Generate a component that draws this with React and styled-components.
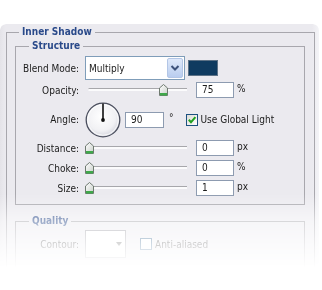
import styled, { createGlobalStyle } from 'styled-components';

const GlobalStyle = createGlobalStyle`
  html, body {
    margin: 0;
    background: #fff;
  }
  body {
    font-family: "DejaVu Sans Condensed", "DejaVu Sans", sans-serif;
    font-size: 10px;
    color: #1c1c1c;
  }
`;

const Page = styled.div`
  width: 322px;
  height: 290px;
  padding-top: 24px;
  box-sizing: border-box;
  overflow: hidden;
`;

const fade = `linear-gradient(to bottom, #000 170px, rgba(0, 0, 0, 0.45) 197px, rgba(0, 0, 0, 0.2) 221px, transparent 244px)`;

const Panel = styled.div`
  width: 319px;
  height: 266px;
  box-sizing: border-box;
  padding: 1px 4px 0 6px;
  border-radius: 6px 6px 0 0;
  background: linear-gradient(to right, #e4e3e8, #ebeaef 5px, #ebeaef 312px, #f4f4f7);
  overflow: hidden;
  mask-image: ${fade};
  -webkit-mask-image: ${fade};
`;

const Group = styled.fieldset`
  margin: ${p => p.$mt || 0}px 0 0 0;
  padding: 0 ${p => p.$pr || 0}px ${p => p.$pb || 0}px ${p => p.$pl || 0}px;
  border: 1px solid #a8a7ad;
  min-width: 0;
  height: ${p => (p.$h ? `${p.$h}px` : 'auto')};
  box-sizing: border-box;
`;

const Legend = styled.legend`
  margin-left: ${p => p.$ml}px;
  padding: 0 3px;
  font-family: "DejaVu Sans Condensed", "DejaVu Sans", sans-serif;
  font-weight: bold;
  font-size: 10px;
  line-height: 14px;
  color: #2a4a8a;
`;

const Row = styled.div`
  display: flex;
  align-items: center;
  height: ${p => p.$h}px;
  margin-top: ${p => p.$mt || 0}px;
`;

const Label = styled.span`
  width: 63px;
  flex-shrink: 0;
  margin-right: 6px;
  text-align: right;
  white-space: nowrap;
`;

const Select = styled.div`
  width: 100px;
  height: 24px;
  box-sizing: border-box;
  border: 1px solid #7f9db9;
  background: #fff;
  display: flex;
  align-items: center;
  justify-content: space-between;
  padding: 1px 1px 1px 3px;
`;

const DropButton = styled.div`
  width: 16px;
  height: 20px;
  box-sizing: border-box;
  border: 1px solid #b3c6e6;
  border-radius: 2px;
  background: linear-gradient(#dfe9fa, #b9cdef);
  display: flex;
  align-items: center;
  justify-content: center;
`;

const Swatch = styled.div`
  width: 30px;
  height: 16px;
  margin-left: 3px;
  box-sizing: border-box;
  border: 1px solid #5d7286;
  background: #0f3b60;
`;

const SliderBox = styled.div`
  position: relative;
  width: 102px;
  height: 12px;
  flex-shrink: 0;
  &::before {
    content: '';
    position: absolute;
    left: 3px;
    right: 0;
    top: 4px;
    height: 2px;
    border-top: 1px solid #a7a7ab;
    border-radius: 2px 0 0 2px;
    background: #fbfbfc;
  }
`;

const Thumb = styled.svg`
  position: absolute;
  top: 0;
`;

const Field = styled.div`
  width: ${p => p.$w || 38}px;
  height: 16px;
  box-sizing: border-box;
  margin-left: ${p => p.$ml || 0}px;
  border: 1px solid #8d9bb0;
  background: #fff;
  padding-left: 5px;
  line-height: 14px;
  flex-shrink: 0;
`;

const Unit = styled.span`
  margin-left: ${p => p.$ml || 3}px;
  margin-top: -4px;
`;

const CheckBox = styled.div`
  width: 12px;
  height: 12px;
  box-sizing: border-box;
  margin-left: ${p => p.$ml || 0}px;
  border: 1px solid #1c5180;
  background: ${p => (p.$faded ? '#fff' : 'linear-gradient(135deg, #dcdcd6, #fff)')};
  display: flex;
  align-items: center;
  justify-content: center;
  flex-shrink: 0;
`;

const CheckText = styled.span`
  margin-left: 3px;
  white-space: nowrap;
`;

const ContourBox = styled.div`
  width: 41px;
  height: 28px;
  box-sizing: border-box;
  border: 1px solid #9a9aa2;
  background: #fff;
  display: flex;
  align-items: center;
  justify-content: flex-end;
  padding-right: 3px;
`;

const Chevron = () => (
  <svg width="10" height="8" viewBox="0 0 10 8">
    <path d="M1.5 2 L5 5.5 L8.5 2" fill="none" stroke="#3d527a" strokeWidth="2" />
  </svg>
);

const ThumbIcon = ({ left }) => (
  <Thumb width="9" height="12" viewBox="0 0 9 12" style={{ left }}>
    <defs>
      <linearGradient id="tg" x1="0" y1="0" x2="1" y2="1">
        <stop offset="0" stopColor="#ffffff" />
        <stop offset="1" stopColor="#c9cfc9" />
      </linearGradient>
    </defs>
    <path d="M4.5 0.5 L8.5 4 L8.5 11.5 L0.5 11.5 L0.5 4 Z" fill="url(#tg)" stroke="#6f7a70" />
    <rect x="1" y="9" width="7" height="2.5" fill="#3fa84a" />
  </Thumb>
);

const Slider = ({ value }) => (
  <SliderBox>
    <ThumbIcon left={Math.round((value / 100) * 98)} />
  </SliderBox>
);

const Dial = () => (
  <svg width="36" height="36" viewBox="0 0 36 36">
    <defs>
      <radialGradient id="dg" cx="0.45" cy="0.4" r="0.6">
        <stop offset="0" stopColor="#ffffff" />
        <stop offset="0.7" stopColor="#f1f1f4" />
        <stop offset="1" stopColor="#d5d6de" />
      </radialGradient>
    </defs>
    <circle cx="18" cy="18" r="16.8" fill="url(#dg)" stroke="#4b4f5e" strokeWidth="1.3" />
    <circle cx="18" cy="18" r="15.3" fill="none" stroke="#ffffff" strokeWidth="0.8" />
    <line x1="18" y1="18" x2="18" y2="1.5" stroke="#111" strokeWidth="1.6" />
    <circle cx="18" cy="18" r="1.9" fill="#111" />
  </svg>
);

const Check = () => (
  <svg width="10" height="10" viewBox="0 0 10 10">
    <path d="M1.8 4.8 L4 7.2 L8.4 2.2" fill="none" stroke="#21a121" strokeWidth="2" />
  </svg>
);

const sliderRows = [
  { label: 'Distance:', value: 0, unit: 'px' },
  { label: 'Choke:', value: 0, unit: '%' },
  { label: 'Size:', value: 1, unit: 'px' },
];

export default function App() {
  return (
    <>
      <GlobalStyle />
      <Page>
        <Panel>
          <Group $pl={8} $pr={9} $h={280}>
            <Legend $ml={4}>Inner Shadow</Legend>
            <Group $pb={6}>
              <Legend $ml={13}>Structure</Legend>
              <Row $h={28} $mt={1}>
                <Label>Blend Mode:</Label>
                <Select>
                  <span>Multiply</span>
                  <DropButton>
                    <Chevron />
                  </DropButton>
                </Select>
                <Swatch />
              </Row>
              <Row $h={16}>
                <Label>Opacity:</Label>
                <Slider value={75} />
                <Field $ml={9}>75</Field>
                <Unit>%</Unit>
              </Row>
              <Row $h={37} $mt={3}>
                <Label>Angle:</Label>
                <Dial />
                <Field $ml={4} $w={39}>90</Field>
                <Unit $ml={5}>°</Unit>
                <CheckBox $ml={12}>
                  <Check />
                </CheckBox>
                <CheckText>Use Global Light</CheckText>
              </Row>
              {sliderRows.map(r => (
                <Row $h={20} key={r.label}>
                  <Label>{r.label}</Label>
                  <Slider value={0} />
                  <Field $ml={9}>{r.value}</Field>
                  <Unit>{r.unit}</Unit>
                </Row>
              ))}
            </Group>
            <Group $mt={9} $h={80}>
              <Legend $ml={13}>Quality</Legend>
              <Row $h={28} $mt={2}>
                <Label>Contour:</Label>
                <ContourBox>
                  <svg width="6" height="4" viewBox="0 0 6 4">
                    <path d="M0 0 H6 L3 4 Z" fill="#555" />
                  </svg>
                </ContourBox>
                <CheckBox $ml={14} $faded />
                <CheckText>Anti-aliased</CheckText>
              </Row>
            </Group>
          </Group>
        </Panel>
      </Page>
    </>
  );
}
